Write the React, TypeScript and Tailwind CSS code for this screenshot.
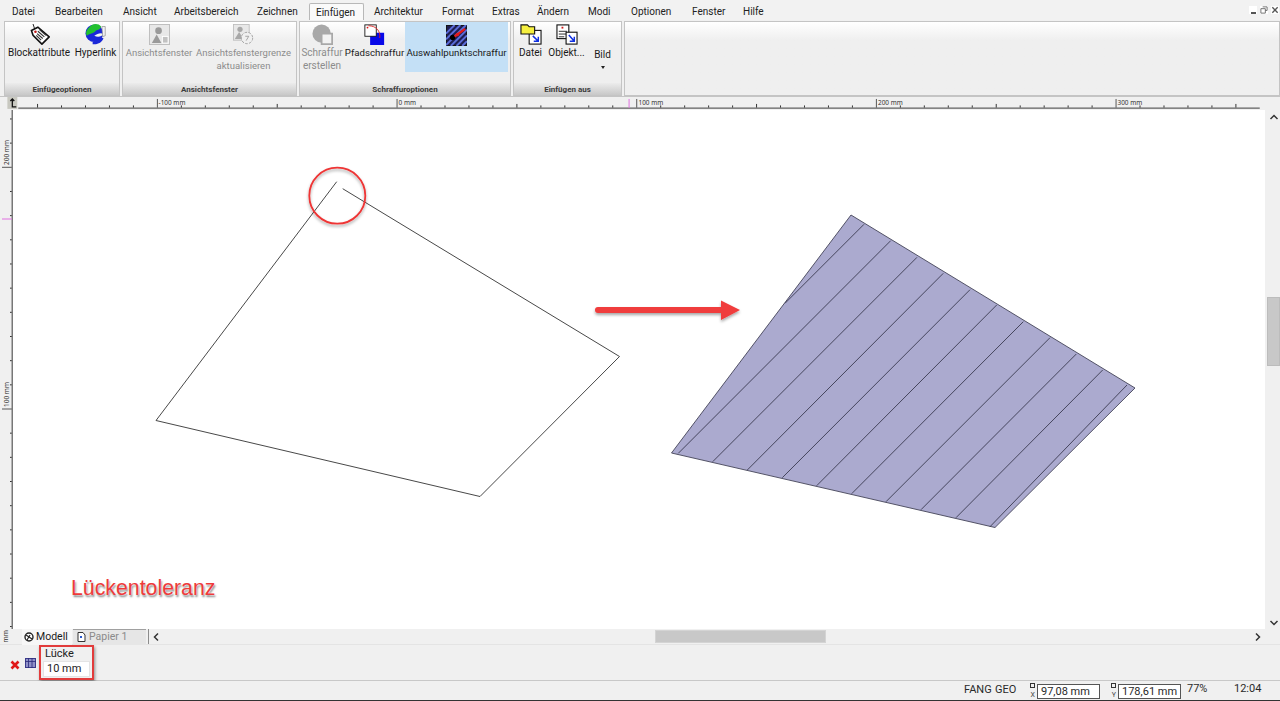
import React from "react";

const FONT = "font-['Roboto','Noto_Sans',sans-serif]";

function TagIcon() {
  return (
    <svg width="21" height="21" viewBox="0 0 26 26">
      <path d="M5 0 L8 9" stroke="#222" strokeWidth="1.2" fill="none" />
      <path d="M3 8 L11 4 L25 16 L16 25 L5 14 Z" fill="#fff" stroke="#111" strokeWidth="2" />
      <circle cx="8" cy="9.5" r="1.6" fill="#c01818" />
      <path d="M11 9 L19 16 M10 12 L17 18 M13 7 L21 14 M9 14 L15 20" stroke="#333" strokeWidth="1.4" />
    </svg>
  );
}

function GlobeIcon() {
  return (
    <svg width="22" height="21" viewBox="0 0 26 25">
      <circle cx="11" cy="11" r="10.5" fill="#1a28d8" />
      <path d="M5 4 C9 -1 16 -1 19 3 C18 8 14 6 12 9 C9 12 6 11 2 14 C0 10 2 7 5 4 Z" fill="#22c030" />
      <path d="M11 14 C15 11 19 10 22 12 C20 15 15 16 11 14 Z" fill="#f2f6f2" />
      <path d="M9 24 C15 25 20 22 22 17 L18 16 C16 19 12 21 9 21 Z" fill="#1a28d8" />
      <path d="M20 3 L24 3 L24 14 L21 15 Z" fill="#f2f2f2" stroke="#8a8a8a" strokeWidth="0.8" />
    </svg>
  );
}

function ViewportIcon() {
  return (
    <svg width="21" height="21" viewBox="0 0 22 22">
      <rect x="0.5" y="0.5" width="21" height="21" fill="#e8e8e8" stroke="#bdbdbd" />
      <circle cx="10" cy="7" r="3.5" fill="#9a9a9a" />
      <path d="M3 20 L8 11 L13 20 Z" fill="#9a9a9a" />
      <rect x="14" y="13" width="6" height="7" fill="#c2c2c2" stroke="#fff" />
    </svg>
  );
}

function ViewportRefreshIcon() {
  return (
    <svg width="21" height="21" viewBox="0 0 24 24">
      <rect x="0.5" y="0.5" width="18" height="18" fill="#e8e8e8" stroke="#bdbdbd" />
      <circle cx="8" cy="6" r="3" fill="#a8a8a8" />
      <path d="M2 17 L7 9 L12 17 Z" fill="#a8a8a8" />
      <circle cx="16" cy="16" r="6.5" fill="#f0f0f0" stroke="#9c9c9c" strokeDasharray="3 1.5" />
      <path d="M14 14 L18 14 L15 19" stroke="#9c9c9c" fill="none" />
    </svg>
  );
}

function HatchCreateIcon() {
  return (
    <svg width="21" height="21" viewBox="0 0 24 24">
      <circle cx="11" cy="11" r="10.5" fill="#a8a8a8" />
      <rect x="11" y="11" width="12" height="12" fill="#f2f2f2" stroke="#a8a8a8" strokeWidth="2" />
    </svg>
  );
}

function PathHatchIcon() {
  return (
    <svg width="21" height="21" viewBox="0 0 24 24">
      <rect x="7" y="10" width="16" height="14" fill="#0808e8" />
      <rect x="1" y="1" width="13" height="13" fill="#fff" stroke="#111" />
      <circle cx="4" cy="4" r="1" fill="#e01010" />
      <path d="M5 2 C14 2 19 8 18 16" stroke="#e02020" fill="none" />
    </svg>
  );
}

function PointHatchIcon() {
  return (
    <svg width="21" height="21" viewBox="0 0 22 22">
      <rect x="0.5" y="0.5" width="21" height="21" fill="#1e1e50" stroke="#111" />
      <path d="M0 9 L9 0 M0 15 L15 0 M0 21 L21 0 M5 22 L22 5 M11 22 L22 11 M17 22 L22 17" stroke="#5a6cd8" strokeWidth="2" />
      <circle cx="7" cy="13" r="2.8" fill="#000" />
      <path d="M9 12 L20 4" stroke="#e41a1a" strokeWidth="2.4" />
      <circle cx="12" cy="10" r="1.8" fill="#e41a1a" />
    </svg>
  );
}

function FileInsertIcon() {
  return (
    <svg width="22" height="21" viewBox="0 0 24 23">
      <rect x="10" y="7" width="13" height="15" fill="#fff" stroke="#111" strokeWidth="1.2" />
      <path d="M1 1 L8 1 L10 3 L16 3 L16 11 L1 11 Z" fill="#f6f040" stroke="#111" strokeWidth="1.2" />
      <path d="M14 13 L20 19 M20 14 L20 19 L15 19" stroke="#1030e0" strokeWidth="1.6" fill="none" />
    </svg>
  );
}

function ObjectInsertIcon() {
  return (
    <svg width="22" height="21" viewBox="0 0 24 23">
      <rect x="1" y="1" width="13" height="15" fill="#fff" stroke="#111" strokeWidth="1.2" />
      <rect x="6" y="3" width="2" height="2" fill="#d01818" />
      <path d="M3 8 H12 M3 11 H12 M3 14 H9" stroke="#222" />
      <rect x="11" y="9" width="12" height="13" fill="#fff" stroke="#111" strokeWidth="1.2" />
      <path d="M14 12 L20 19 M20 14 L20 19 L15 19" stroke="#1030e0" strokeWidth="1.6" fill="none" />
    </svg>
  );
}

function Ribbon() {
  return (
    <div className="h-[78px] flex pl-[4px] pt-[1px] gap-[2px] bg-[#f0f0f0] text-[10px] leading-[13px]">
      <div className="w-[116px] h-[75px] flex flex-col border border-[#c4c4c4] bg-gradient-to-b from-[#ffffff] to-[#efefef] from-0% to-[25%]">
        <div className="flex-1 flex pt-[2px] text-[#1a1a1a]">
          <div className="w-[68px] flex flex-col items-center">
            <TagIcon />
            <span className="mt-[1px]">Blockattribute</span>
          </div>
          <div className="w-[45px] flex flex-col items-center">
            <GlobeIcon />
            <span className="mt-[1px]">Hyperlink</span>
          </div>
        </div>
        <Footer label="Einfügeoptionen" />
      </div>
      <div className="w-[175px] h-[75px] flex flex-col border border-[#c4c4c4] bg-gradient-to-b from-[#ffffff] to-[#efefef] from-0% to-[25%]">
        <div className="flex-1 flex pt-[2px] text-[#8c8c8c] text-[9.5px]">
          <div className="w-[72px] flex flex-col items-center">
            <ViewportIcon />
            <span className="mt-[1px]">Ansichtsfenster</span>
          </div>
          <div className="w-[97px] flex flex-col items-center">
            <ViewportRefreshIcon />
            <span className="mt-[1px] text-center whitespace-nowrap">
              Ansichtsfenstergrenze
              <br />
              aktualisieren
            </span>
          </div>
        </div>
        <Footer label="Ansichtsfenster" />
      </div>
      <div className="w-[212px] h-[75px] flex flex-col border border-[#c4c4c4] bg-gradient-to-b from-[#ffffff] to-[#efefef] from-0% to-[25%]">
        <div className="flex-1 flex text-[#1a1a1a]">
          <div className="w-[44px] flex flex-col items-center pt-[2px] text-[#8c8c8c]">
            <HatchCreateIcon />
            <span className="mt-[1px] text-center">
              Schraffur
              <br />
              erstellen
            </span>
          </div>
          <div className="w-[61px] flex flex-col items-center pt-[2px] text-[9.7px]">
            <PathHatchIcon />
            <span className="mt-[1px] whitespace-nowrap">Pfadschraffur</span>
          </div>
          <div className="w-[103px] h-[50px] flex flex-col items-center pt-[3px] bg-[#c4e0f6] text-[9.7px]">
            <PointHatchIcon />
            <span className="whitespace-nowrap">Auswahlpunktschraffur</span>
          </div>
        </div>
        <Footer label="Schraffuroptionen" />
      </div>
      <div className="w-[109px] h-[75px] flex flex-col border border-[#c4c4c4] bg-gradient-to-b from-[#ffffff] to-[#efefef] from-0% to-[25%]">
        <div className="flex-1 flex pt-[2px] text-[#1a1a1a]">
          <div className="w-[33px] flex flex-col items-center">
            <FileInsertIcon />
            <span className="mt-[1px]">Datei</span>
          </div>
          <div className="w-[39px] flex flex-col items-center">
            <ObjectInsertIcon />
            <span className="mt-[1px]">Objekt...</span>
          </div>
          <div className="flex-1 flex flex-col items-center pt-[24px] pr-[2px]">
            <span>Bild</span>
            <span className="mt-[5px] w-0 h-0 border-x-[2px] border-t-[3px] border-x-transparent border-t-[#222]" />
          </div>
        </div>
        <Footer label="Einfügen aus" />
      </div>
      <div className="w-[656px] h-[75px] border border-[#c4c4c4] bg-gradient-to-b from-[#ffffff] to-[#efefef] from-0% to-[25%]" />
    </div>
  );
}

function Footer({ label }: { label: string }) {
  return (
    <div className="h-[12px] pt-[2px] flex items-center justify-center bg-gradient-to-b from-[#ececec] to-[#c8c8c8] text-[8px] font-bold text-[#3c3c3c] leading-none">
      {label}
    </div>
  );
}

function MenuBar() {
  return (
    <div className="h-[20px] pt-[3px] flex items-center text-[10px] text-[#222] pl-[12px] bg-[#f2f2f2]">
      <span className="w-[43px]">Datei</span>
      <span className="w-[68px]">Bearbeiten</span>
      <span className="w-[51px]">Ansicht</span>
      <span className="w-[83px]">Arbeitsbereich</span>
      <span className="w-[52px]">Zeichnen</span>
      <span className="w-[55px] h-[17px] mr-[10px] pl-[6px] border border-b-0 border-[#b8b8b8] bg-[#fafafa] rounded-t-[2px] flex items-center">Einfügen</span>
      <span className="w-[68px]">Architektur</span>
      <span className="w-[50px]">Format</span>
      <span className="w-[45px]">Extras</span>
      <span className="w-[51px]">Ändern</span>
      <span className="w-[43px]">Modi</span>
      <span className="w-[61px]">Optionen</span>
      <span className="w-[51px]">Fenster</span>
      <span>Hilfe</span>
      <div className="ml-auto mr-[1px] -mt-[4px] flex items-center gap-[3px]">
        <span className="w-[8px] h-[8px] flex items-end justify-center bg-white">
          <span className="w-[5px] h-[2px] bg-[#555]" />
        </span>
        <svg width="8" height="8" viewBox="0 0 9 9" className="bg-white">
          <path d="M3 1 H8 V5 H6 M1 3 H6 V8 H1 Z" fill="none" stroke="#666" />
        </svg>
        <svg width="8" height="8" viewBox="0 0 9 9" className="bg-white">
          <path d="M1.5 1.5 L7.5 7.5 M7.5 1.5 L1.5 7.5" stroke="#555" strokeWidth="1.5" />
        </svg>
      </div>
    </div>
  );
}

const STEP = 24.17;

function HRuler() {
  const ticks: React.ReactNode[] = [];
  for (let i = -15; i < 38; i++) {
    const x = 395 + i * STEP;
    if (x < 14 || x > 1265) continue;
    const major = i % 10 === 0;
    const mid = !major && i % 5 === 0;
    ticks.push(
      <line
        key={i}
        x1={x}
        x2={x}
        y1={major ? 2 : mid ? 7 : 8.5}
        y2={11}
        stroke={major ? "#555" : "#333"}
        strokeWidth={1}
      />
    );
  }
  return (
    <svg width="1280" height="13" viewBox="0 0 1280 13" className="block bg-[#f0f0f0]">
      {ticks}
      <rect x="13" y="10.5" width="1252" height="1.5" fill="#777" />
      <rect x="2" y="0" width="10" height="12" fill="#c8c8c0" />
      <path d="M7 2 V10 H11 M5 4 L7 2 L9 4" fill="none" stroke="#111" strokeWidth="1.3" />
      <line x1="629" x2="629" y1="2" y2="11" stroke="#e070e0" />
      <text x="154.5" y="8" fontSize="6.5" fill="#333" fontFamily="Noto Sans">-100 mm</text>
      <text x="396.5" y="8" fontSize="6.5" fill="#333" fontFamily="Noto Sans">0 mm</text>
      <text x="638.5" y="8" fontSize="6.5" fill="#333" fontFamily="Noto Sans">100 mm</text>
      <text x="880" y="8" fontSize="6.5" fill="#333" fontFamily="Noto Sans">200 mm</text>
      <text x="1121.5" y="8" fontSize="6.5" fill="#333" fontFamily="Noto Sans">300 mm</text>
    </svg>
  );
}

function VRuler() {
  const ticks: React.ReactNode[] = [];
  for (let i = -6; i < 22; i++) {
    const y = 167.3 + i * STEP;
    if (y < 110 || y > 629) continue;
    const major = i % 10 === 0;
    ticks.push(
      <line key={i} x1={major ? 2 : 10} x2={12} y1={y} y2={y} stroke={major ? "#555" : "#333"} />
    );
  }
  return (
    <svg width="13" height="519" viewBox="0 110 13 519" className="block shrink-0 bg-[#f0f0f0]">
      {ticks}
      <rect x="11.5" y="110" width="1.5" height="519" fill="#777" />
      <line x1="2" x2="12" y1="219" y2="219" stroke="#e070e0" />
      <text transform="translate(8.5 165) rotate(-90)" fontSize="6.5" fill="#333" fontFamily="Noto Sans">200 mm</text>
      <text transform="translate(8.5 407) rotate(-90)" fontSize="6.5" fill="#333" fontFamily="Noto Sans">100 mm</text>
    </svg>
  );
}

const HATCH: [number, number, number, number][] = [
  [864, 224.3, 785, 303.3],
  [890.7, 240.7, 678.3, 453.3],
  [917, 257.3, 712.7, 461.7],
  [943.3, 273.3, 747.3, 470],
  [970, 289.7, 782.3, 477.7],
  [996.7, 305, 816.7, 485.7],
  [1023.3, 321.7, 851.7, 493.7],
  [1050, 337.7, 886, 501.7],
  [1076.3, 354, 921, 509.7],
  [1102.7, 370, 956, 517.7],
  [1127, 385, 990, 526.7],
];

function Drawing() {
  return (
    <svg viewBox="13 110 1252 519" width="1252" height="519" className="block absolute inset-0">
      <defs>
        <filter id="sh" x="-20%" y="-50%" width="140%" height="220%">
          <feDropShadow dx="0" dy="2" stdDeviation="1.5" floodColor="#000" floodOpacity="0.35" />
        </filter>
      </defs>
      <path d="M336.7 181.7 L156 420.5 L480 496.5 L619.5 356.5 L342.7 188.7" fill="none" stroke="#333" strokeWidth="0.9" />
      <circle cx="337.3" cy="195.7" r="28" fill="none" stroke="#ee3535" strokeWidth="1.8" filter="url(#sh)" />
      <g filter="url(#sh)">
        <path d="M598 307 H721 V300.5 L740 310 L721 320 V313 H598 A3 3 0 0 1 598 307 Z" fill="#f03c3c" />
      </g>
      <path d="M851 215 L1135 388 L995 527.5 L671.5 453 Z" fill="#abaacf" stroke="#444458" strokeWidth="0.9" />
      {HATCH.map(([a, b, c, d], i) => (
        <line key={i} x1={a} y1={b} x2={c} y2={d} stroke="#2c2c40" strokeWidth="0.8" />
      ))}
    </svg>
  );
}

function Canvas() {
  return (
    <div className="flex h-[519px]">
      <VRuler />
      <div className="relative w-[1252px] bg-white overflow-hidden">
        <Drawing />
        <span className="absolute left-[58px] top-[464px] text-[21.3px] leading-[28px] font-['Liberation_Sans',sans-serif] text-[#ee3a3a] [text-shadow:0_0_2px_#fff,1px_2px_2px_rgba(0,0,0,0.5)]">
          Lückentoleranz
        </span>
      </div>
      <div className="w-[15px] flex flex-col items-center bg-[#f0f0f0] pl-[2px]">
        <svg width="10" height="8" viewBox="0 0 10 8" className="mt-[3px]">
          <path d="M1.5 6 L5 2.5 L8.5 6" fill="none" stroke="#333" strokeWidth="1.5" />
        </svg>
        <div className="w-[13px] h-[69px] mt-[176px] bg-[#c8c8c8] border border-[#bcbcbc]" />
        <div className="flex-1" />
        <svg width="10" height="8" viewBox="0 0 10 8" className="mb-[2px]">
          <path d="M1.5 2 L5 5.5 L8.5 2" fill="none" stroke="#333" strokeWidth="1.5" />
        </svg>
      </div>
    </div>
  );
}

function TabBar() {
  return (
    <div className="h-[16px] flex items-center bg-[#f0f0f0] border-b border-[#e4e4e4] text-[10.5px]">
      <span className="w-[13px] text-center text-[7px] -rotate-90 text-[#333]">mm</span>
      <div className="ml-[9px] w-[50px] h-[16px] flex items-center gap-[2px] pl-[2px] bg-[#f7f7f7] text-[#1a1a1a]">
        <svg width="10" height="10" viewBox="0 0 10 10">
          <circle cx="5" cy="5" r="4" fill="#fff" stroke="#222" strokeWidth="1.4" />
          <path d="M2 3 L8 7 M3 8 L6 3" stroke="#222" strokeWidth="1.2" />
        </svg>
        <span>Modell</span>
      </div>
      <div className="ml-[1px] w-[73px] h-[16px] flex items-center gap-[3px] pl-[4px] border-t border-[#a0a0a0] bg-[#e6e6e6] text-[#8a8a8a]">
        <svg width="9" height="10" viewBox="0 0 9 10">
          <path d="M1 0.5 H6 L8 3 V9.5 H1 Z" fill="#fff" stroke="#333" />
          <rect x="3" y="4" width="2" height="2" fill="#2a5ad0" />
        </svg>
        <span>Papier 1</span>
      </div>
      <div className="ml-[2px] w-[1px] h-[15px] bg-[#8c8c8c]" />
      <svg width="8" height="10" viewBox="0 0 8 10" className="ml-[3px]">
        <path d="M6 1.5 L2.5 5 L6 8.5" fill="none" stroke="#333" strokeWidth="1.5" />
      </svg>
      <div className="ml-[495px] w-[171px] h-[13px] bg-[#c8c8c8] border border-[#d4d4d4]" />
      <svg width="8" height="10" viewBox="0 0 8 10" className="ml-auto mr-[18px]">
        <path d="M2 1.5 L5.5 5 L2 8.5" fill="none" stroke="#333" strokeWidth="1.5" />
      </svg>
    </div>
  );
}

function CommandBar() {
  return (
    <div className="h-[36px] flex items-start bg-[#f0f0f0] border-b border-[#c8c8c8]">
      <svg width="10" height="10" viewBox="0 0 10 10" className="ml-[10px] mt-[15px]">
        <path d="M1.5 1.5 L8.5 8.5 M8.5 1.5 L1.5 8.5" stroke="#e01818" strokeWidth="2.6" />
      </svg>
      <svg width="11" height="10" viewBox="0 0 11 10" className="ml-[5px] mt-[13px]">
        <rect x="0.5" y="0.5" width="10" height="9" fill="#8f90c8" stroke="#3a3a8a" />
        <path d="M0 3.5 H11 M3.5 0 V10 M7 0 V10" stroke="#2a2a78" strokeWidth="0.8" />
      </svg>
      <div className="ml-[3px] w-[55px] h-[35px] flex flex-col pl-[2px] border-2 border-[#e23c3c] shadow-[1px_2px_3px_rgba(0,0,0,0.4)]">
        <span className="ml-[2px] text-[11px] leading-[13px] text-[#222]">Lücke</span>
        <div className="w-[47px] h-[16px] mt-[1px] bg-white border border-[#e4e4e4] text-[11px] leading-[14px] pl-[3px] text-[#222]">10 mm</div>
      </div>
    </div>
  );
}

function StatusBar() {
  return (
    <div className="h-[20px] flex items-center bg-[#f0f0f0] text-[11px] text-[#2a2a2a] border-b border-[#333]">
      <span className="ml-[964px] w-[31px]">FANG</span>
      <span className="w-[24px]">GEO</span>
      <div className="w-[18px] h-[16px] flex flex-col justify-between items-end pr-[2px] text-[7px] leading-[7px] text-[#444]">
        <span className="w-[5px] h-[5px] border border-[#333]" />
        <span>X</span>
      </div>
      <div className="w-[63px] h-[15px] mt-[1px] border border-[#555] bg-white leading-[13px] pl-[3px]">97,08 mm</div>
      <div className="w-[18px] h-[16px] flex flex-col justify-between items-end pr-[2px] text-[7px] leading-[7px] text-[#444]">
        <span className="w-[5px] h-[5px] border border-[#333]" />
        <span>Y</span>
      </div>
      <div className="w-[63px] h-[15px] mt-[1px] border border-[#555] bg-white leading-[13px] pl-[3px]">178,61 mm</div>
      <span className="ml-[6px] w-[47px] -mt-[2px]">77%</span>
      <span className="-mt-[2px]">12:04</span>
    </div>
  );
}

export default function App() {
  return (
    <div className={`w-[1280px] h-[701px] flex flex-col overflow-hidden bg-[#f0f0f0] ${FONT}`}>
      <MenuBar />
      <Ribbon />
      <div className="h-[2px] -mt-[1px] mb-[-1px] bg-[#c4c4c4]" />
      <HRuler />
      <Canvas />
      <TabBar />
      <CommandBar />
      <StatusBar />
    </div>
  );
}
